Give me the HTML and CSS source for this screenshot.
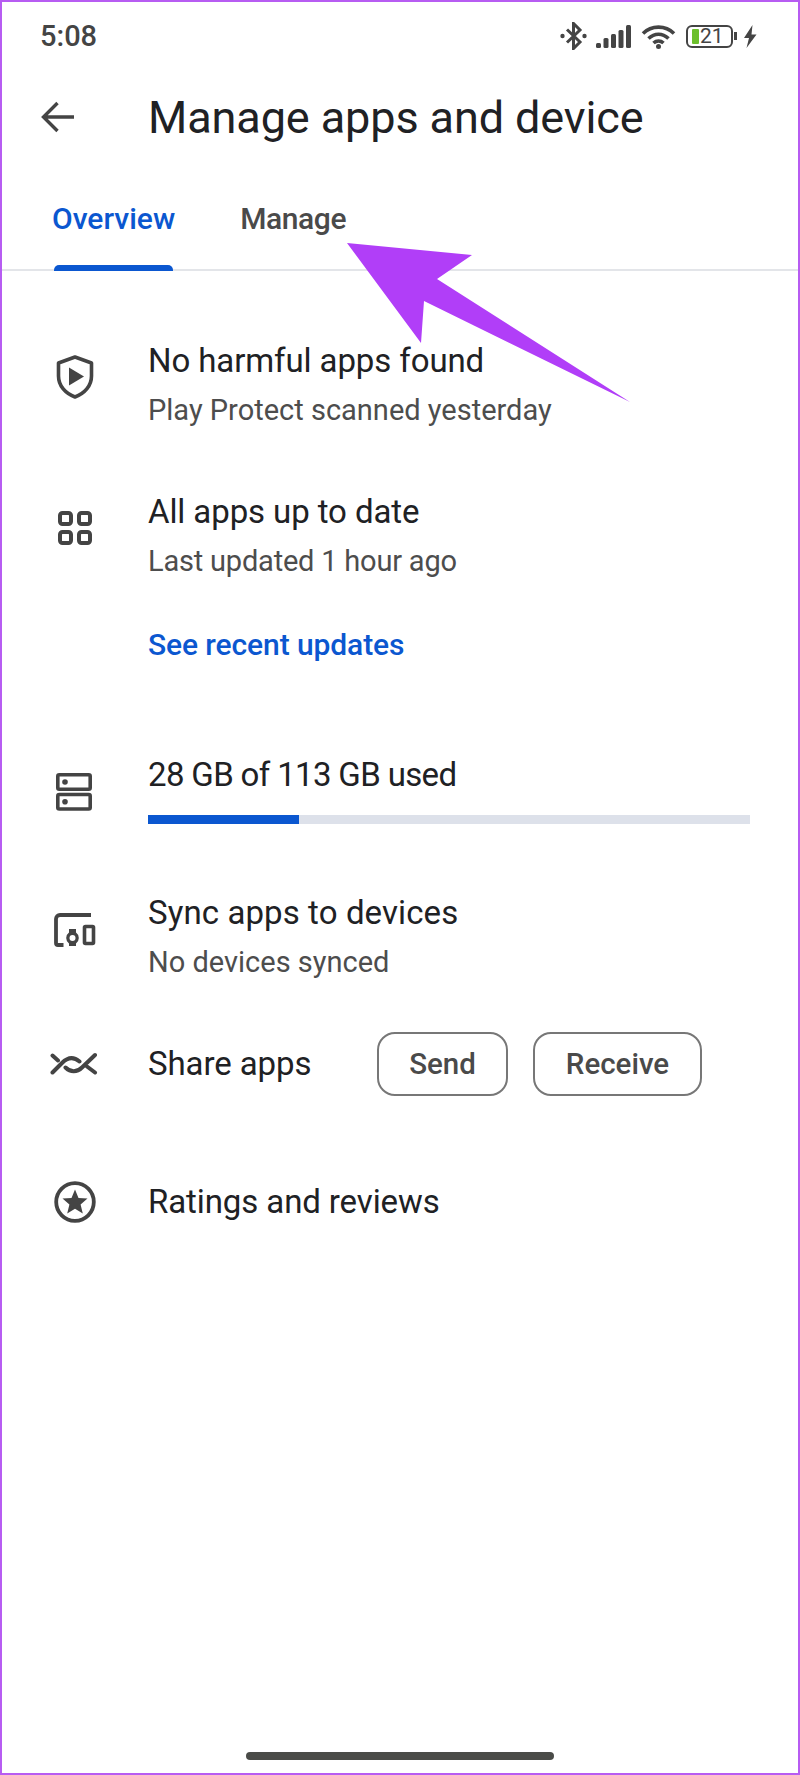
FILE: index.html
```html
<!DOCTYPE html>
<html lang="en">
<head>
<meta charset="utf-8">
<title>Manage apps and device</title>
<link rel="stylesheet" href="styles.css">
</head>
<body>
<div class="frame">
  <header class="status">
    <span class="time">5:08</span>
    <div class="status-icons">
      <svg class="ic-bt" width="27" height="28" viewBox="0 0 27 28"><path d="M7 7.500 20 20 13.500 26.500V1.500L20 8 7 20.500" fill="none" stroke="#444" stroke-width="3"/><circle cx="2.500" cy="14" r="2.200" fill="#444"/><circle cx="24.500" cy="14" r="2.200" fill="#444"/></svg>
      <svg class="ic-sig" width="35" height="23" viewBox="0 0 35 23"><rect x="0" y="18" width="5" height="5" rx="1.500" fill="#444"/><rect x="7.500" y="13" width="5" height="10" rx="1.500" fill="#444"/><rect x="15" y="9" width="5" height="14" rx="1.500" fill="#444"/><rect x="22.500" y="5" width="5" height="18" rx="1.500" fill="#444"/><rect x="30" y="0" width="5" height="23" rx="1.500" fill="#444"/></svg>
      <svg class="ic-wifi" width="35" height="25" viewBox="0 0 35 25"><path d="M2 9.500C10.500 1 24.500 1 33 9.500M7.500 14.500C13.500 8.800 21.500 8.800 27.500 14.500M12.500 19C15.500 16.300 19.500 16.300 22.500 19" fill="none" stroke="#444" stroke-width="3.600"/><circle cx="17.500" cy="22.500" r="2.500" fill="#444"/></svg>
      <div class="battery"><span class="battery-fill"></span><span class="battery-num">21</span></div>
      <span class="battery-nub"></span>
      <svg class="ic-bolt" width="14" height="23" viewBox="0 0 14 23"><path d="M9.500 0 1 13H6L3.500 23 13.500 9.500H8.500Z" fill="#444"/></svg>
    </div>
  </header>

  <div class="appbar">
    <svg class="back" width="34" height="32" viewBox="0 0 34 32"><path d="M33 16H3M16.500 2 2.500 16 16.500 30" fill="none" stroke="#444" stroke-width="3.400"/></svg>
    <h1 class="title">Manage apps and device</h1>
  </div>

  <nav class="tabs">
    <div class="tab tab-active">Overview<span class="indicator"></span></div>
    <div class="tab tab-manage">Manage</div>
  </nav>

  <main class="list">
    <section class="row row-protect">
      <div class="icon icon-protect"><svg width="38" height="44" viewBox="0 0 38 44"><path d="M19 2 35.500 8V21C35.500 31 28.500 38.500 19 42 9.500 38.500 2.500 31 2.500 21V8Z" fill="none" stroke="#444" stroke-width="3.600" stroke-linejoin="round"/><path d="M13 12.500 28 21.500 13 30.500Z" fill="#444"/></svg></div>
      <div class="body">
        <div class="primary">No harmful apps found</div>
        <div class="secondary">Play Protect scanned yesterday</div>
      </div>
    </section>

    <section class="row row-updates">
      <div class="icon icon-updates"><svg width="34" height="34" viewBox="0 0 34 34"><g fill="none" stroke="#444" stroke-width="4"><rect x="2" y="2" width="11" height="11" rx="2.500"/><rect x="21" y="2" width="11" height="11" rx="2.500"/><rect x="2" y="21" width="11" height="11" rx="2.500"/><rect x="21" y="21" width="11" height="11" rx="2.500"/></g></svg></div>
      <div class="body">
        <div class="primary">All apps up to date</div>
        <div class="secondary secondary-tight">Last updated 1 hour ago</div>
        <a class="link">See recent updates</a>
      </div>
    </section>

    <section class="row row-storage">
      <div class="icon icon-storage"><svg width="36" height="38" viewBox="0 0 36 38"><g fill="none" stroke="#444" stroke-width="3.600"><rect x="1.800" y="1.800" width="32.400" height="14.500" rx="1.500"/><rect x="1.800" y="21.500" width="32.400" height="14.500" rx="1.500"/></g><circle cx="9" cy="9" r="2.800" fill="#444"/><circle cx="9" cy="28.800" r="2.800" fill="#444"/></svg></div>
      <div class="body">
        <div class="primary primary-tight">28 GB of 113 GB used</div>
        <div class="progress"><span class="progress-fill"></span></div>
      </div>
    </section>

    <section class="row row-sync">
      <div class="icon icon-sync"><svg width="42" height="34" viewBox="0 0 42 34"><path d="M37 2H6A4 4 0 0 0 2 6V30A2 2 0 0 0 4 32H9.500" fill="none" stroke="#444" stroke-width="3.800"/><rect x="30.500" y="13.500" width="9" height="17" rx="1" fill="none" stroke="#444" stroke-width="3.600"/><path d="M15 16H22V19.500A6.800 6.800 0 0 1 22 30.500V33H15V30.500A6.800 6.800 0 0 1 15 19.500Z" fill="#444"/><circle cx="18.500" cy="25" r="3" fill="#fff"/></svg></div>
      <div class="body">
        <div class="primary primary-wide">Sync apps to devices</div>
        <div class="secondary">No devices synced</div>
      </div>
    </section>

    <section class="row row-share">
      <div class="icon icon-share"><svg width="48" height="24" viewBox="0 0 48 24"><path d="M2.500 20.500 12 11C17 6 23 4 29.500 9.500M37 14.500 45 20.500M2.500 3.500 8 8.500M15.500 15.500C20.500 20.500 27 20.500 32 15.500L45 3" fill="none" stroke="#444" stroke-width="4" stroke-linecap="round"/></svg></div>
      <div class="primary share-label">Share apps</div>
      <div class="share-actions">
        <button class="btn btn-send">Send</button>
        <button class="btn btn-receive">Receive</button>
      </div>
    </section>

    <section class="row row-ratings">
      <div class="icon"><svg width="42" height="42" viewBox="0 0 42 42"><circle cx="21" cy="21" r="18.800" fill="none" stroke="#444" stroke-width="3.800"/><path d="M21 8.500 24.500 17 33.500 17.600 26.600 23.500 28.800 32.500 21 27.700 13.200 32.500 15.400 23.500 8.500 17.600 17.500 17Z" fill="#444"/></svg></div>
      <div class="primary">Ratings and reviews</div>
    </section>
  </main>

  <div class="home-bar"></div>

  <svg class="arrow" width="800" height="500" viewBox="0 0 800 500"><path d="M347 243 472 255 437 279 630 402 424 301 421 343Z" fill="#b13ef8"/></svg>
</div>
</body>
</html>
```

FILE: styles.css
```css
* { box-sizing: border-box; }
html, body { margin: 0; padding: 0; background: #fff; }
body { width: 800px; height: 1775px; font-family: Roboto, "Noto Sans", sans-serif; color: #202124; }
.frame { position: relative; width: 800px; height: 1775px; border: 2px solid #b75cf2; background: #fff; display: flex; flex-direction: column; overflow: hidden; }

.status { height: 62px; padding: 0 41px 0 38px; display: flex; align-items: center; justify-content: space-between; margin-top: 3px; }
.time { font-size: 29px; font-weight: 500; color: #444; }
.status-icons { display: flex; align-items: center; }
.ic-bt { margin-right: 9px; }
.ic-sig { margin-right: 10px; }
.ic-wifi { margin-right: 10px; }
.battery { width: 47px; height: 23px; border: 2px solid #444; border-radius: 6px; display: flex; align-items: center; padding-left: 4px; }
.battery-fill { width: 7px; height: 15px; background: #6cbf2c; border-radius: 1px; }
.battery-num { font-size: 21px; color: #444; margin-left: 1px; line-height: 19px; }
.battery-nub { width: 3px; height: 8px; background: #444; margin: 0 6px 0 1px; }

.appbar { height: 78px; padding-left: 39px; display: flex; align-items: center; margin-top: 11px; }
.back { margin-right: 73px; }
.title { margin: 0; font-size: 45px; font-weight: 400; letter-spacing: -0.1px; color: #202124; white-space: nowrap; }

.tabs { height: 115px; padding: 45px 0 0 50px; display: flex; gap: 65px; border-bottom: 2px solid #e3e5e9; align-items: flex-start; }
.tab { position: relative; font-size: 30px; font-weight: 500; color: #4a4a4a; line-height: 36px; }
.tab-active { color: #0b57d0; }
.tab-manage { letter-spacing: -0.4px; }
.indicator { position: absolute; left: 2px; right: 2px; top: 64px; height: 6px; background: #0b57d0; border-radius: 5px 5px 0 0; }

.list { display: flex; flex-direction: column; padding-left: 52px; }
.row { display: flex; align-items: flex-start; }
.icon { width: 94px; flex: none; display: flex; }
.icon-protect { padding: 15px 0 0 2px; }
.icon-updates { padding: 20px 0 0 4px; }
.icon-storage { padding: 19px 0 0 2px; }
.icon-sync { padding: 21px 0 0 0; }
.icon-share { margin-left: -4px; width: 98px; }
.primary { font-size: 33px; line-height: 42px; letter-spacing: -0.1px; color: #202124; white-space: nowrap; }
.primary-tight { letter-spacing: -0.65px; }
.primary-wide { letter-spacing: 0.1px; }
.secondary { font-size: 29px; line-height: 34px; color: #4d4d4d; margin-top: 11px; white-space: nowrap; }
.secondary-tight { letter-spacing: -0.2px; }
.link { display: block; font-size: 30px; font-weight: 500; line-height: 36px; color: #0b57d0; margin-top: 49px; letter-spacing: -0.1px; }
.body { flex: 1; }

.row-protect { margin-top: 69px; }
.row-updates { margin-top: 64px; }
.row-storage { margin-top: 91px; }
.row-sync { margin-top: 68px; }
.row-share { margin-top: 53px; align-items: center; }
.row-ratings { margin-top: 85px; align-items: center; }

.progress { width: 602px; height: 9px; background: #dde1ea; margin-top: 19px; }
.progress-fill { display: block; width: 151px; height: 9px; background: #0b57d0; }

.share-label { width: 229px; }
.share-actions { display: flex; gap: 25px; }
.btn { height: 64px; background: #fff; border: 2px solid #777; border-radius: 18px; font-family: inherit; font-size: 29.5px; font-weight: 500; color: #4a4a4a; padding: 0; }
.btn-send { width: 131px; }
.btn-receive { width: 169px; }

.home-bar { position: absolute; left: 244px; top: 1750px; width: 308px; height: 8px; background: #4a4b48; border-radius: 4px; }
.arrow { position: absolute; left: -2px; top: -2px; pointer-events: none; }
```
